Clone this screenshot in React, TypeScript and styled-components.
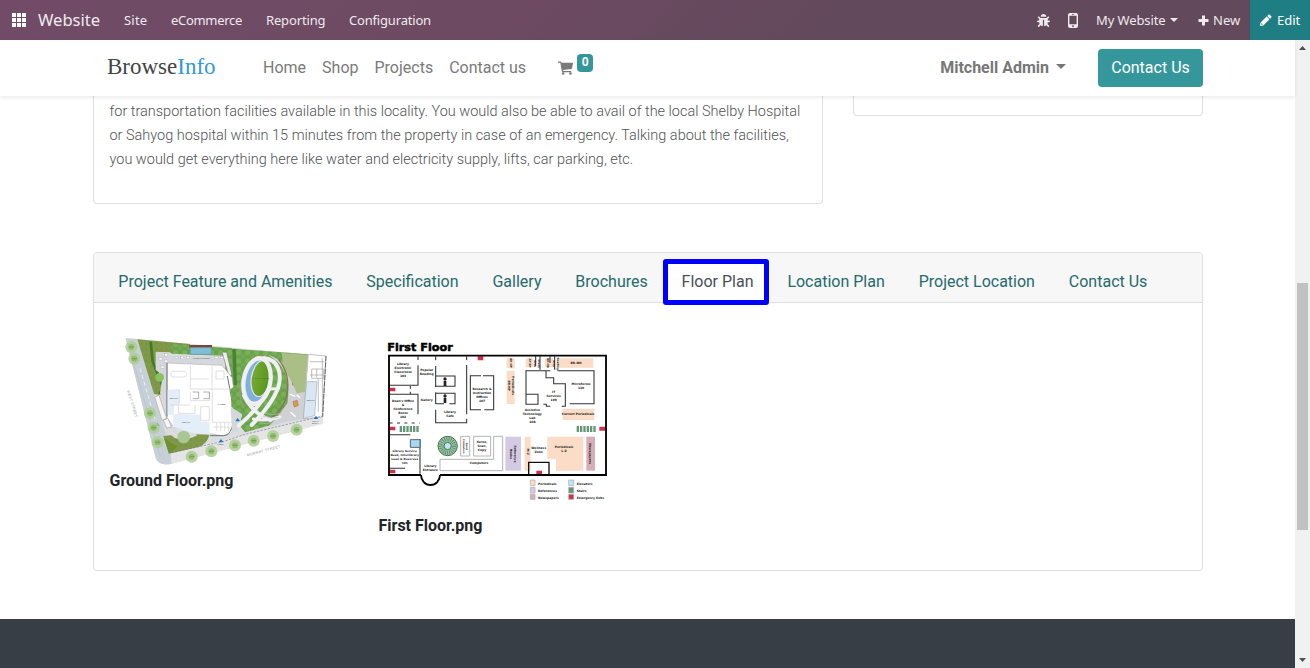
import React from 'react';
import styled, { createGlobalStyle } from 'styled-components';
import { FaBug } from 'react-icons/fa';

const Global = createGlobalStyle`
  *, *::before, *::after { box-sizing: border-box; }
  html, body { margin: 0; padding: 0; overflow: hidden; background: #fff; }
  body { font-family: Roboto, sans-serif; font-size: 16px; line-height: 24px; color: #212529; }
`;

const Screen = styled.div`
  width: 1310px;
  height: 668px;
  overflow: hidden;
  display: flex;
  flex-direction: column;
`;

const TopBar = styled.nav`
  flex: 0 0 40px;
  display: flex;
  align-items: center;
  padding-left: 12px;
  background: linear-gradient(135deg, #714b67 0%, #6d4a62 38%, #62495b 66%, #62495b 100%);
  color: #efeaed;
  font: 13px/40px 'Noto Sans', sans-serif;
  white-space: nowrap;
`;
const AppGrid = styled.svg`
  width: 14px;
  height: 14px;
  margin-right: 12px;
  fill: #fff;
`;
const AppName = styled.span`
  width: 86px;
  font-size: 16.6px;
  letter-spacing: -0.02px;
`;
const TopItem = styled.span<{ $w: number; $ls?: number }>`
  width: ${(p) => p.$w}px;
  letter-spacing: ${(p) => p.$ls ?? 0}px;
`;
const TopTools = styled.div`
  margin-left: auto;
  display: flex;
  align-items: center;
  svg { flex: none; }
`;
const ToolIcon = styled.span<{ $gap: number; $before?: number }>`
  display: flex;
  margin: 0 ${(p) => p.$gap}px 0 ${(p) => p.$before ?? 0}px;
`;
const Caret = styled.i<{ $size: number }>`
  width: 0;
  height: 0;
  border: ${(p) => p.$size}px solid transparent;
  border-top-color: currentColor;
  border-bottom: 0;
`;
const EditButton = styled.div`
  width: 60px;
  height: 40px;
  display: flex;
  align-items: center;
  gap: 5px;
  padding-left: 10px;
  background: #1f7e83;
  color: #fff;
`;

const Frame = styled.div`
  flex: 1;
  min-height: 0;
  display: flex;
`;
const Page = styled.div`
  flex: 1;
  min-width: 0;
  display: flex;
  flex-direction: column;
`;
const Header = styled.header`
  flex: 0 0 56px;
  display: flex;
  align-items: center;
  padding: 0 92px 0 107px;
  background: #fff;
  box-shadow: 0 2px 4px rgba(0, 0, 0, 0.075);
  color: #7a7a7a;
  z-index: 1;
  white-space: nowrap;
`;
const Logo = styled.div`
  width: 156px;
  padding-bottom: 2px;
  font: 23px/30px 'Liberation Serif', serif;
  color: #444;
  span { color: #3498db; }
`;
const NavLinks = styled.div`
  display: flex;
  gap: 16px;
`;
const Cart = styled.div`
  display: flex;
  align-items: center;
  margin-left: 32px;
`;
const Badge = styled.span`
  width: 16px;
  height: 18px;
  margin: -10px 0 0 4px;
  border-radius: 4px;
  background: #35979c;
  color: #fff;
  font: bold 12px/17px Roboto, sans-serif;
  text-align: center;
`;
const User = styled.div`
  margin-left: auto;
  display: flex;
  align-items: center;
  gap: 7px;
  font-weight: 700;
  color: #777;
  i { margin-bottom: 3px; }
`;
const ContactButton = styled.div`
  width: 105px;
  height: 38px;
  margin-left: 32px;
  border-radius: 4px;
  background: #35979c;
  color: #fff;
  line-height: 37px;
  text-align: center;
`;

const Content = styled.main`
  flex: 0 0 523px;
  padding: 0 92px 0 93px;
`;
const Intro = styled.div`
  display: flex;
  align-items: flex-start;
  gap: 30px;
`;
const IntroCard = styled.section`
  width: 730px;
  height: 108px;
  padding: 4px 0 0 15.5px;
  border: 1px solid #dfdfdf;
  border-top: 0;
  border-radius: 0 0 4px 4px;
  font-weight: 300;
  font-size: 14.48px;
  color: #505356;
  white-space: nowrap;
`;
const SideCard = styled.aside`
  width: 350px;
  height: 20px;
  border: 1px solid #dfdfdf;
  border-top: 0;
  border-radius: 0 0 4px 4px;
`;
const TabCard = styled.section`
  margin-top: 48px;
  height: 319px;
  border: 1px solid #dfdfdf;
  border-radius: 4px;
`;
const TabBar = styled.div`
  height: 50px;
  display: flex;
  align-items: flex-start;
  padding: 6px 0 0 7.4px;
  background: #f7f7f7;
  border-bottom: 1px solid #dfdfdf;
  border-radius: 3px 3px 0 0;
  white-space: nowrap;
`;
const Tab = styled.div<{ $active?: boolean }>`
  position: relative;
  height: 44px;
  padding: 0 16.95px;
  line-height: 45px;
  color: ${(p) => (p.$active ? '#495057' : '#256a6d')};
  background: ${(p) => (p.$active ? '#fff' : 'transparent')};
`;
const Highlight = styled.span`
  position: absolute;
  inset: -0.5px 1.5px -1.5px -2px;
  border: 5px solid #00f;
  border-radius: 3px;
`;
const Plans = styled.div`
  display: flex;
  padding: 22px 0 0 15.5px;
`;
const Plan = styled.figure<{ $top?: number }>`
  width: 269px;
  margin: ${(p) => p.$top ?? 0}px 0 0;
  svg { display: block; }
`;
const Caption = styled.figcaption<{ $top?: number }>`
  margin-top: ${(p) => p.$top ?? 0}px;
  font-weight: 700;
`;
const Footer = styled.footer`
  flex: 1;
  background: #383e45;
`;
const ScrollTrack = styled.div`
  width: 15px;
  display: flex;
  flex-direction: column;
  align-items: center;
  background: #f1f1f1;
`;
const ScrollArrow = styled.svg`
  width: 15px;
  height: 15px;
  fill: #505050;
`;
const ScrollThumb = styled.div`
  width: 11px;
  height: 247px;
  margin: 228px 0 auto;
  background: #c1c1c1;
`;

const Tree = ({ x, y, r = 18 }: { x: number; y: number; r?: number }) => (
  <g>
    <circle cx={x} cy={y} r={r} fill="#adce93" opacity=".88" />
    <circle cx={x} cy={y} r={r * 0.5} fill="#92bc72" />
    <path d={`M${x - r * 0.4} ${y}h${r * 0.8}`} stroke="#78a55b" strokeWidth="4" />
  </g>
);

const GroundFloor = () => (
  <svg width="230" height="144" viewBox="0 0 690 432" fontFamily="Liberation Sans, sans-serif">
    <defs>
      <pattern id="leaf" width="27" height="25" patternUnits="userSpaceOnUse">
        <rect width="27" height="25" fill="#68a24b" />
        <circle cx="8" cy="8" r="8" fill="#79b058" />
        <circle cx="21" cy="19" r="7" fill="#72a952" />
      </pattern>
      <pattern id="hedge" width="15" height="17" patternUnits="userSpaceOnUse">
        <rect width="15" height="17" fill="#7e9a48" />
        <circle cx="4" cy="5" r="3" fill="#6f933e" />
        <circle cx="11" cy="12" r="3" fill="#948a4d" />
      </pattern>
      <pattern id="paving" width="22" height="30" patternUnits="userSpaceOnUse">
        <rect width="22" height="30" fill="#e6e5e5" />
        <path d="M0 0H22M0 0V30" stroke="#dcdcdc" strokeWidth="1.5" />
      </pattern>
      <linearGradient id="lawn">
        <stop offset="0" stopColor="#78aa32" />
        <stop offset="1" stopColor="#579521" />
      </linearGradient>
    </defs>
    <path d="M47 40 82 42 648 93 638 296 185 416Q148 425 137 398L132 380Z" fill="#dcdde0" />
    <path d="M47 40 82 42 185 385 185 416Q148 425 137 398Z" fill="#c8d0d7" />
    <path d="M55 60 151 395" stroke="#bbc6cf" strokeWidth="3" />
    <path d="M90 130 137 290" stroke="#eef1f4" strokeWidth="3" strokeDasharray="12 9" />
    <path d="M182 384 640 270 638 296 185 416Z" fill="url(#paving)" />
    <path d="M82 43 240 57 240 88 140 80 136 135 158 150 150 210 132 207Z" fill="url(#hedge)" />
    <path d="M122 50 128 110 160 188 148 207" fill="none" stroke="#3e7c28" strokeWidth="8" />
    <path d="M184 57 366 70 366 94 184 86Z" fill="url(#leaf)" />
    <path d="M238 60H306V68H238Z" fill="#7b4437" />
    <path d="M241 68H304V88H241Z" fill="#82bdd6" stroke="#5e9cb6" strokeWidth="2" />
    <path d="M137 82H180V92H340V132H172L172 250 150 205 158 150 137 135Z" fill="#d5d7dd" />
    <g fill="#fff" stroke="#aeb2b8" strokeWidth="1.5">
      {[[147, 98], [164, 86], [164, 105], [153, 123], [195, 94], [212, 94], [229, 94], [315, 94], [332, 94]].map(([x, y]) => (
        <rect key={`${x}-${y}`} x={x} y={y} width="9" height="7" />
      ))}
    </g>
    <circle cx="149" cy="157" r="13" fill="#8ac25e" />
    <path d="M132 213 150 209 205 336 190 350 170 340Z" fill="#d8dade" />
    <path d="M134 216 147 211 170 280 156 286ZM160 285 174 280 184 306 170 309Z" fill="#f7f7f7" stroke="#aaa49e" strokeWidth="2" />
    <path d="M160 333Q207 326 250 328L298 329Q293 354 268 365L177 386Z" fill="url(#hedge)" />
    <path d="M162 340 202 365 177 386Z" fill="#708f2e" />
    <path d="M180 318Q205 352 258 326" fill="none" stroke="#ddd" strokeWidth="12" />
    <circle cx="221" cy="336" r="19" fill="#a9c795" />
    <path d="M346 70 380 72 378 245 346 170Z" fill="url(#leaf)" />
    <path d="M336 81 350 82 366 150 356 152Z" fill="#eee" stroke="#777" strokeWidth="2" />
    <path d="M171 114 336 121 366 158Q383 244 366 322Q354 333 334 332L191 307 170 275Z" fill="#fff" stroke="#b3b3b3" strokeWidth="2" />
    <path d="M171 114 171 275M300 332 340 332Q374 330 371 252L352 153" fill="none" stroke="#6f7176" strokeWidth="3" />
    <g fill="#e3eef8">
      <path d="M173 194 207 192 207 238 193 240 191 269 173 270Z" />
      <path d="M190 266 272 269 272 290 298 290 300 328 250 325 189 306Z" />
    </g>
    <g fill="none" stroke="#d0d0d3" strokeWidth="2">
      <path d="M186 139h39q10 9 0 17h-39q-8-9 0-17ZM241 122v70M241 162h55M306 122v75M241 192h119M208 193v45M241 202v25h58v-25M272 245v41h26v-41ZM307 200v92M307 292h55M320 294v25M332 294v25M344 294v25M356 294v25M308 306h50M180 240h60M205 240v25h50v-25M318 138h24v24h-24Z" />
      <path d="M248 201h18v20h-18M280 201h18v20h-18" stroke="#888" />
    </g>
    <g fill="#697078" fontSize="7" fontWeight="bold">
      <text x="249" y="101" fontSize="6">CHURCH STREET</text>
      <text x="179" y="221">RETAIL</text>
      <text x="216" y="294">RETAIL</text>
      <text x="324" y="241">LOBBY</text>
    </g>
    <path d="M376 72 594 88 592 270 520 290 405 322 388 300 396 270 364 245 362 192 379 180Z" fill="url(#leaf)" />
    <path d="M372 72 376 180" stroke="#4a8137" strokeWidth="10" />
    <path d="M362 245 396 268 385 318 366 322Z" fill="#d5d7da" />
    <path d="M476 90Q548 115 546 180L592 205 590 280 520 292 475 305 500 278 532 235Q545 150 500 108Z" fill="#d0d1d4" />
    <path d="M515 84 594 89 592 200 560 205 548 175 520 128Z" fill="#a9bf85" />
    <path d="M470 90Q420 102 392 172Q385 220 402 248" fill="none" stroke="#a39c80" strokeWidth="3" />
    <path d="M506 103Q550 160 524 230Q510 262 480 280" fill="none" stroke="#8b7450" strokeWidth="4" />
    <ellipse cx="441" cy="168" rx="38" ry="67" transform="rotate(10 441 168)" fill="#80b1dc" />
    <ellipse cx="452" cy="161" rx="28" ry="54" transform="rotate(9 452 161)" fill="url(#lawn)" stroke="#e9ecf0" strokeWidth="3" />
    <g fill="none" stroke="#f0eff3" strokeLinecap="round">
      <ellipse cx="441" cy="168" rx="40" ry="69" transform="rotate(10 441 168)" strokeWidth="13" />
      <path d="M462 99C505 104 518 145 504 190Q485 240 425 300M402 212Q432 270 482 285M476 194Q448 248 386 302" strokeWidth="12" />
      <path d="M476 192 502 191M430 282Q470 290 510 276" strokeWidth="9" />
    </g>
    <path d="M462 265Q495 272 515 264M458 273Q485 282 506 278M448 294Q470 300 488 290" fill="none" stroke="#b6bac1" strokeWidth="2" />
    <text x="427" y="161" fontSize="7" fill="#516c2a">PARK GARDEN</text>
    <path d="M595 88 648 93 637 276 580 282Z" fill="#fff" stroke="#c3c3c3" strokeWidth="3" />
    <path d="M590 170 621 170 614 272 580 280Z" fill="#d9e7f5" stroke="#9fabb6" strokeWidth="2" />
    <path d="M600 110h43M605 132h36v28h-36ZM625 160v100M600 150h40M620 132v25M637 100v166" fill="none" stroke="#a0a0a0" strokeWidth="2" />
    <path d="M648 93l-10 182" stroke="#666" strokeWidth="3" strokeDasharray="16 3" />
    <text x="590" y="229" fontSize="7" fontWeight="bold" fill="#536c82">RETAIL</text>
    <path d="m549 230 12-4 4 15-12 5Z" fill="#d89a54" stroke="#b0793e" strokeWidth="2" />
    <path d="m542 262 15 13M538 207l18 7M560 210l10 8" stroke="#fff" strokeWidth="4" />
    <path d="M185 383 345 348 405 328 638 273" fill="none" stroke="#747c91" strokeWidth="2" strokeDasharray="7 4" />
    <g fill="#1876c6">
      {[[142, 298], [333, 347], [383, 284], [618, 277]].map(([x, y]) => (
        <path key={x} d={`M${x - 7} ${y + 5}L${x} ${y - 5}L${x + 7} ${y + 5}Z`} />
      ))}
    </g>
    <Tree x={64} y={66} /><Tree x={73} y={101} /><Tree x={120} y={265} /><Tree x={131} y={308} />
    <Tree x={143} y={352} /><Tree x={245} y={395} /><Tree x={304} y={379} /><Tree x={375} y={361} />
    <Tree x={431} y={347} /><Tree x={489} y={333} /><Tree x={560} y={314} />
    <g fill="#9a9a9a" fontSize="11">
      <text transform="translate(51 197) rotate(73)" textLength="84">WEST STREET</text>
      <text transform="translate(412 394) rotate(-15)" textLength="103">MURRAY STREET</text>
    </g>
    <text x="322" y="359" fontSize="6" fill="#456">LOBBY</text>
    <text x="606" y="290" fontSize="6" fill="#456">RETAIL</text>
    <text x="606" y="298" fontSize="6" fill="#456">ENTRY</text>
  </svg>
);

type LabelProps = { x: number; y: number; lines: string[]; size?: number; step?: number; rotate?: number };
const Label = ({ x, y, lines, size = 9, step = 12, rotate = 0 }: LabelProps) => (
  <g transform={`translate(${x} ${y}) rotate(${rotate})`} fontSize={size} textAnchor="middle">
    {lines.map((line, i) => (
      <text key={i} y={i * step}>{line}</text>
    ))}
  </g>
);

const FirstFloor = () => (
  <svg width="240" height="175" viewBox="14 0 720 525" fontFamily="DejaVu Sans, sans-serif" fontWeight="bold" fill="#222">
    <text x="39" y="47" fontSize="32" textLength="196" lengthAdjust="spacingAndGlyphs" fill="#000" stroke="#000" strokeWidth="1.5">First Floor</text>
    <g fill="#fbdcc7">
      <path d="M397 70h24v30h-24ZM397 107h24v100h-24ZM454 70h23v27h-23ZM512 70h24v27h-24ZM549 70h108v28H549ZM565 221h95v34h-95ZM451 305h18v102h-18ZM519 305h108v102h-82v-34h-26Z" />
    </g>
    <path d="M393 305h47v102h-47Z" fill="#d5cae4" />
    <path d="M636 305h26v102h-26Z" fill="#d7adb6" />
    <g fill="#cf304d">
      <path d="M310 64h17v12h-17ZM46 158h17v11H46ZM46 275h17v11H46ZM46 404h17v11H46ZM675 275h17v12h-17ZM486 407h17v13h-17Z" />
    </g>
    <path d="M76 282h60M607 282h60" stroke="#669777" strokeWidth="18" strokeDasharray="7 3" />
    <g fill="none" stroke="#333" strokeWidth="3.2">
      <path d="M44 151h87v-60M131 64v11M44 178h87v60M108 153v8M108 170v8M184 64v12M184 93v63M184 123h58v31h-60M225 154h17M184 172v35M184 175h58v31h-17M184 206h25M184 224v39h93v-12M277 64v11M277 90v148M320 122h-32v102h17M326 122h32v102h-28M305 224h15M44 299h64M44 400h48M137 312v104" />
      <path d="M46 264h90" strokeDasharray="9 13" />
      <path d="M528 107h-73v101h13M455 178h36v30h-28M515 107v21h23v18h35v68h-11M549 107h110v99h-73M507 208h9v6h12M497 64v40M541 64v40M527 64v20M484 64v30" />
    </g>
    <path d="M108 314h29v23h-29Z" fill="#a9d9f2" stroke="#567" strokeWidth="3" />
    <g fill="#222">
      <circle cx="212" cy="132" r="5" /><path d="M208 138h8v15h-8Z" />
      <circle cx="212" cy="183" r="5" /><path d="M208 189h8v15h-8Z" />
    </g>
    <g fill="none" stroke="#b4b4b4" strokeWidth="3">
      <path d="M259 304h27v59h-27ZM298 304h51v59h-51ZM358 304h27v103H197v-34h161Z" />
    </g>
    <circle cx="220" cy="333" r="29" fill="#9fc7a5" stroke="#416f50" strokeWidth="3" />
    <circle cx="220" cy="333" r="20" fill="none" stroke="#61936f" strokeWidth="12" strokeDasharray="3 3" />
    <circle cx="220" cy="333" r="11" fill="#bfe2f4" stroke="#416f50" strokeWidth="3" />
    <path d="M463 420v-38h61v38" fill="none" stroke="#111" strokeWidth="4" />
    <path d="M140 420H44V62H695V420H197" fill="none" stroke="#000" strokeWidth="5.5" />
    <path d="M140 420A28.5 30 0 0 0 197 420" fill="none" stroke="#000" strokeWidth="5.5" />
    <Label x={86} y={90} lines={['Library', 'Electronic', 'Classroom', '103']} />
    <Label x={157} y={107} lines={['Popular', 'Reading']} />
    <Label x={86} y={202} lines={["Dean's Office", '&', 'Conference', 'Room', '102']} />
    <Label x={157} y={198} lines={['Gallery']} />
    <Label x={227} y={233} lines={['Library', 'Cafe']} />
    <Label x={323} y={165} lines={['Research &', 'Instruction', 'Offices', '107']} />
    <Label x={406} y={84} rotate={90} size={8} lines={['BR-NP']} />
    <Label x={413} y={152} rotate={90} lines={['Periodicals', 'BR-NP']} />
    <Label x={463} y={84} rotate={90} size={8} lines={['AP-BP']} />
    <Label x={492} y={86} rotate={90} size={8} lines={['Study', 'Area']} />
    <Label x={519} y={84} rotate={90} size={8} lines={['BR-NB']} />
    <Label x={548} y={86} rotate={90} size={8} lines={['Reading', 'Area']} />
    <Label x={605} y={87} lines={['BR-NO']} />
    <Label x={620} y={151} lines={['Microforms', '110']} />
    <Label x={538} y={173} lines={['IT', 'Services', '109']} />
    <Label x={474} y={227} lines={['Assistive', 'Technology', 'Lab', '108']} />
    <Label x={611} y={241} lines={['Current Periodicals']} />
    <Label x={91} y={350} size={8.6} lines={['Library Service', 'Desk, Interlibrary', 'Loan & Reserves', '101']} />
    <Label x={168} y={397} lines={['Library', 'Entrance']} />
    <Label x={275} y={334} rotate={90} size={7} step={10} lines={['Quiet', 'Computers']} />
    <Label x={323} y={324} lines={['Xerox,', 'Scan,', 'Copy']} />
    <Label x={314} y={388} lines={['Computers']} />
    <Label x={420} y={357} rotate={90} lines={['Reference', 'Books']} />
    <Label x={457} y={350} rotate={90} lines={['M-Z']} />
    <Label x={493} y={342} lines={['Wellness', 'Zone']} />
    <Label x={569} y={340} lines={['Periodicals', 'L-Z']} />
    <Label x={645} y={356} rotate={90} lines={['Newspapers']} />
    <g stroke="#aaa" strokeWidth="2">
      <path d="M468 435h14v17h-14Z" fill="#fbdcc7" />
      <path d="M468 457h14v17h-14Z" fill="#d5cae4" />
      <path d="M468 478h14v15h-14Z" fill="#d7adb6" />
      <path d="M583 435h15v17h-15Z" fill="#b9e5f7" />
      <path d="M583 457h15v17h-15Z" fill="#669777" />
      <path d="M583 478h15v15h-15Z" fill="#cf304d" />
    </g>
    <g fontSize="9">
      <text x="491" y="451">Periodicals</text>
      <text x="491" y="472">References</text>
      <text x="491" y="493">Newspapers</text>
      <text x="607" y="449">Elevators</text>
      <text x="607" y="472">Stairs</text>
      <text x="607" y="493" textLength="82">Emergency Exits</text>
    </g>
  </svg>
);

const tabs = [
  'Project Feature and Amenities', 'Specification', 'Gallery', 'Brochures',
  'Floor Plan', 'Location Plan', 'Project Location', 'Contact Us',
];

export default function App() {
  return (
    <Screen>
      <Global />
      <TopBar>
        <AppGrid viewBox="0 0 14 14">
          <path d="M0 0h4v4H0zM5 0h4v4H5zM10 0h4v4h-4zM0 5h4v4H0zM5 5h4v4H5zM10 5h4v4h-4zM0 10h4v4H0zM5 10h4v4H5zM10 10h4v4h-4z" />
        </AppGrid>
        <AppName>Website</AppName>
        <TopItem $w={47} $ls={0.2}>Site</TopItem>
        <TopItem $w={95} $ls={-0.3}>eCommerce</TopItem>
        <TopItem $w={83} $ls={-0.15}>Reporting</TopItem>
        <TopItem $w={90} $ls={-0.18}>Configuration</TopItem>
        <TopTools>
          <ToolIcon $gap={18}><FaBug size={13} /></ToolIcon>
          <ToolIcon $gap={18}>
            <svg width="10" height="15" viewBox="0 0 10 15">
              <path fillRule="evenodd" fill="currentColor" d="M2 0h6q2 0 2 2v11q0 2-2 2H2q-2 0-2-2V2Q0 0 2 0ZM1.4 2.7v8.6h7.2V2.7ZM4 1v.7h2V1ZM5 12.2a.9.9 0 1 0 .01 0Z" />
            </svg>
          </ToolIcon>
          <TopItem $w={74} $ls={-0.1}>My Website</TopItem>
          <Caret $size={4} />
          <ToolIcon $gap={4} $before={20}>
            <svg width="11" height="11" viewBox="0 0 11 11">
              <path d="M5.5 .5v10M.5 5.5h10" stroke="currentColor" strokeWidth="3" />
            </svg>
          </ToolIcon>
          <TopItem $w={37}>New</TopItem>
          <EditButton>
            <svg width="12" height="12" viewBox="0 0 12 12" fill="currentColor">
              <path d="M8.4.8q.7-.7 1.4 0l1.4 1.4q.7.7 0 1.4l-1.1 1.1L7.3 1.9ZM6.7 2.5 9.5 5.3 3.4 11.4 0 12l.6-3.4ZM1.5 9l-.3 1.8L3 10.5Z" />
            </svg>
            <span>Edit</span>
          </EditButton>
        </TopTools>
      </TopBar>
      <Frame>
        <Page>
          <Header>
            <Logo>Browse<span>Info</span></Logo>
            <NavLinks>
              <span>Home</span><span>Shop</span><span>Projects</span><span>Contact us</span>
            </NavLinks>
            <Cart>
              <svg width="15" height="14" viewBox="0 0 15 14" fill="currentColor">
                <path d="M0 .5h2.7q.6 0 .8 1.2H14.5q.5 0 .5.6l-1 5q-.1.5-.6.6L5 8.9l.2 1.1h8v1.2H4.5q-.5 0-.6-.6L2.3 1.7H0Z" />
                <circle cx="5.2" cy="12.5" r="1.3" /><circle cx="12.5" cy="12.5" r="1.3" />
              </svg>
              <Badge>0</Badge>
            </Cart>
            <User>Mitchell Admin<Caret $size={5} /></User>
            <ContactButton>Contact Us</ContactButton>
          </Header>
          <Content>
            <Intro>
              <IntroCard>
                for transportation facilities available in this locality. You would also be able to avail of the local Shelby Hospital<br />
                or Sahyog hospital within 15 minutes from the property in case of an emergency. Talking about the facilities,<br />
                you would get everything here like water and electricity supply, lifts, car parking, etc.
              </IntroCard>
              <SideCard />
            </Intro>
            <TabCard>
              <TabBar>
                {tabs.map((name) => (
                  <Tab key={name} $active={name === 'Floor Plan'}>
                    {name}
                    {name === 'Floor Plan' && <Highlight />}
                  </Tab>
                ))}
              </TabBar>
              <Plans>
                <Plan>
                  <GroundFloor />
                  <Caption>Ground Floor.png</Caption>
                </Plan>
                <Plan $top={10}>
                  <FirstFloor />
                  <Caption $top={4}>First Floor.png</Caption>
                </Plan>
              </Plans>
            </TabCard>
          </Content>
          <Footer />
        </Page>
        <ScrollTrack>
          <ScrollArrow viewBox="0 0 15 15"><path d="M4 10 7.5 6 11 10Z" /></ScrollArrow>
          <ScrollThumb />
          <ScrollArrow viewBox="0 0 15 15"><path d="M4 5 7.5 9 11 5Z" /></ScrollArrow>
        </ScrollTrack>
      </Frame>
    </Screen>
  );
}
